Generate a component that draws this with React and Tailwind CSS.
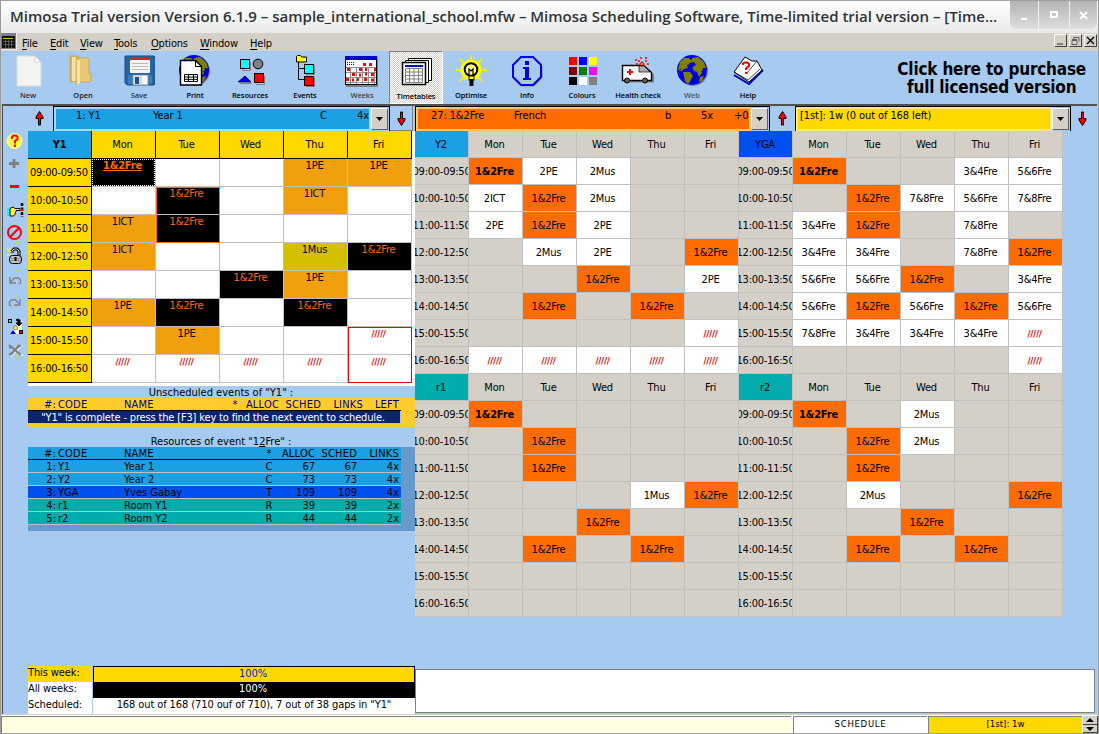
import React from "react";

const DAYS = ["Mon", "Tue", "Wed", "Thu", "Fri"];
const TIMES = [
  "09:00-09:50", "10:00-10:50", "11:00-11:50", "12:00-12:50",
  "13:00-13:50", "14:00-14:50", "15:00-15:50", "16:00-16:50",
];
const F = "1&2Fre";
const X = "/////";

const MAIN = [
  ["*" + F, "", "", "1PE", "1PE"],
  ["", F, "", "1ICT", ""],
  ["1ICT", F, "", "", ""],
  ["1ICT", "", "", "1Mus", F],
  ["", "", F, "1PE", ""],
  ["1PE", F, "", F, ""],
  ["", "1PE", "", "", X],
  [X, X, X, X, X],
];

const SMALL = [
  {
    name: "Y2", head: "bg-[#1ca0e4]",
    rows: [
      ["*" + F, "2PE", "2Mus", "", ""],
      ["2ICT", F, "2Mus", "", ""],
      ["2PE", F, "2PE", "", ""],
      ["", "2Mus", "2PE", "", F],
      ["", "", F, "", "2PE"],
      ["", F, "", F, ""],
      ["", "", "", "", X],
      [X, X, X, X, X],
    ],
  },
  {
    name: "YGA", head: "bg-[#0050f0]",
    rows: [
      ["*" + F, "", "", "3&4Fre", "5&6Fre"],
      ["", F, "7&8Fre", "5&6Fre", "7&8Fre"],
      ["3&4Fre", F, "", "7&8Fre", ""],
      ["3&4Fre", "3&4Fre", "", "7&8Fre", F],
      ["5&6Fre", "5&6Fre", F, "", "3&4Fre"],
      ["5&6Fre", F, "5&6Fre", F, "5&6Fre"],
      ["7&8Fre", "3&4Fre", "3&4Fre", "3&4Fre", X],
      ["", "", "", "", X],
    ],
  },
  {
    name: "r1", head: "bg-[#00acac]",
    rows: [
      ["*" + F, "", "", "", ""],
      ["", F, "", "", ""],
      ["", F, "", "", ""],
      ["", "", "", "1Mus", F],
      ["", "", F, "", ""],
      ["", F, "", F, ""],
      ["", "", "", "", ""],
      ["", "", "", "", ""],
    ],
  },
  {
    name: "r2", head: "bg-[#00acac]",
    rows: [
      ["*" + F, "", "2Mus", "", ""],
      ["", F, "2Mus", "", ""],
      ["", F, "", "", ""],
      ["", "2Mus", "", "", F],
      ["", "", F, "", ""],
      ["", F, "", F, ""],
      ["", "", "", "", ""],
      ["", "", "", "", ""],
    ],
  },
];

function Globe({ cx, cy }) {
  return (
    <g transform={`translate(${cx - 15} ${cy - 15})`}>
      <circle cx="16" cy="16" r="15" fill="#808080" />
      <circle cx="15" cy="15" r="15" fill="#0000e8" />
      <path d="M3 7l4-4 5 0 3 3-2 3-3 1 1 3-4 1-3 3-3-2zM6 17l7 0 3 4-2 4-3 4-3-3z" fill="#808000" />
      <path d="M15 3l6-1 6 5 2 6-3 0-1 5-3 4-2-5-3-1-2-4 4-2-2-3-3 1zM23 22l4-1-2 5-3 1z" fill="#808000" />
      <path d="M15 23l3 4M19 22l2 5M3 14l2 5M25 16l2 4M13 8l3 5" stroke="#000080" strokeWidth="1.5" strokeDasharray="1 1" />
    </g>
  );
}

const TOOLS = [
  ["New", "12 54 32 34", <g key="i">
    <path d="M17 56h18l6 6v24H17z" fill="#f3f3f1" stroke="#dcdcda" strokeWidth="1" />
    <path d="M35 56v6h6z" fill="#fff" stroke="#c8c8c8" strokeWidth=".7" />
  </g>, "text-[#333]"],
  ["Open", "67 54 32 34", <g key="i">
    <path d="M70 56h8l1 1v23l-9 2z" fill="#d9b65c" stroke="#b8933c" strokeWidth=".6" />
    <path d="M72 57h4v24h-4z" fill="#f4e3a6" />
    <path d="M76 59l3-1h10v16h2v7l-2 1H79l-3 3z" fill="#e6c877" stroke="#c39d48" strokeWidth=".7" />
    <path d="M77 60l3 1v22l-3 2z" fill="#f5e3ab" />
  </g>, "text-[#222]"],
  ["Save", "123 54 32 34", <g key="i">
    <path d="M125 56h29l1 1v27l-1 1h-27l-2-2z" fill="#2464a4" stroke="#184a80" strokeWidth="1" />
    <rect x="128" y="75" width="24" height="9" fill="#3c7cbc" />
    <rect x="130" y="57" width="20" height="3" fill="#b83038" />
    <rect x="130" y="60" width="20" height="13" rx="1" fill="#f4f4f0" />
    <path d="M132 63.500h16M132 66.500h16M132 69.500h16" stroke="#b8b8b8" />
    <rect x="133" y="75" width="15" height="10" fill="#d8dce0" stroke="#909aa4" strokeWidth=".6" />
    <rect x="135" y="77" width="4" height="7" fill="#1c5490" />
    <rect x="142" y="76" width="5" height="8" fill="#f8f8f8" />
  </g>, "text-[#333]"],
  ["Print", "179 54 32 34", <g key="i">
    <Globe cx={194} cy={70} />
    <path d="M180.500 60.500h15l6 6v18.500h-21z" fill="#fff" stroke="#000" strokeWidth="1.400" />
    <path d="M195.500 60.500v6h6" fill="none" stroke="#000" />
    <path d="M184.500 74.500h13v7h-13zM184.500 77h13M184.500 79.300h13M188.500 74.500v7M193.500 74.500v7" fill="none" stroke="#000" />
  </g>],
  ["Resources", "234 54 32 34", <g key="i">
    <path d="M242 70.500h8.500v-9M256 84.500h8.500v-9M240 83.500h12" stroke="#808080" fill="none" />
    <rect x="240.500" y="59.500" width="9" height="9" fill="#0ff" stroke="#000" />
    <circle cx="258" cy="64" r="4.800" fill="#808080" stroke="#000" />
    <path d="M245 76l6 6h-13z" fill="#00f" stroke="#000" strokeWidth=".7" />
    <rect x="254.500" y="73.500" width="9" height="9" fill="#f00" stroke="#000" />
  </g>],
  ["Events", "289 54 32 34", <g key="i">
    <path d="M298.500 62v17.500h6M298.500 68.500h6" stroke="#000" fill="none" />
    <path d="M296.500 56.500l1-1h3l1 1.500h5v5h-10z" fill="#ff0" stroke="#000" />
    <path d="M306 74.500h8.500v-9M306 86.500h8.500v-9" stroke="#808080" fill="none" />
    <rect x="304.500" y="64.500" width="9" height="9" fill="#0ff" stroke="#000" />
    <rect x="304.500" y="76.500" width="9" height="9" fill="#f00" stroke="#000" />
  </g>],
  ["Weeks", "345 54 34 34", <g key="i">
    <rect x="346" y="58" width="32" height="29" fill="#808080" />
    <rect x="345.500" y="56.500" width="31" height="28" fill="#fff" stroke="#000" />
    <rect x="345" y="56" width="32" height="4" fill="#0000c0" />
    <path d="M347.500 62v3M349.500 62v3M351.500 62v3M353.500 62v3" stroke="#0000c0" strokeDasharray="1 1" />
    <path d="M346 67.500h30M346 72.500h30M346 77.500h30M346 82.500h30M350.500 67v17M356.500 67v17M362.500 67v17M368.500 67v17M374.500 67v17" stroke="#909090" />
    <path d="M363 64.500h3M369 64.500h3M374 69.500h2M347 69.500h3M359 69.500h3M365 69.500h2M352 74.500h3M359 75h2M371 74.500h3M346 79.500h3M364 79.500h3M357 79.500h2M371 80h3M352 80h2M365 74h2" stroke="#f00" strokeWidth="3" />
  </g>, "text-[#444]"],
  ["Timetables", "400 55 32 34", <g key="i">
    <path d="M408.500 58.500h23v22h-23z" fill="#fff" stroke="#000" />
    <path d="M405.500 60.500h23v22h-23z" fill="#fff" stroke="#000" />
    <path d="M402.500 62.500h23v22h-23z" fill="#fff" stroke="#000" strokeWidth="1.500" />
    <rect x="405" y="65" width="18" height="2" fill="#0000c0" />
    <path d="M405.500 68.500h17v14h-17zM405.500 72h17M405.500 75.500h17M405.500 79h17M409.500 68v14M414 68v14M418.500 68v14" fill="none" stroke="#808080" />
  </g>, "text-black", true],
  ["Optimise", "455 54 32 34", <g key="i">
    <circle cx="471" cy="70" r="10.500" fill="#ff0" />
    <path d="M471 55v6M456 70h5M481 70h6M460 59l4 4M482 59l-4 4M460 81l4-4M482 81l-4-4" stroke="#f0f000" strokeWidth="2" />
    <circle cx="471" cy="69.500" r="6.300" fill="#ffff90" stroke="#000" strokeWidth="2" />
    <path d="M469 76v-7l2 2 2-2v7" fill="none" stroke="#000" strokeWidth="1.200" />
    <rect x="469" y="76" width="5" height="4" fill="#ff0" stroke="#000" />
    <path d="M471.500 79v7" stroke="#000" strokeWidth="4" />
  </g>],
  ["Info", "511 54 32 34", <g key="i">
    <path d="M522 58h12l8 8v12l-8 8h-12" stroke="#808080" fill="none" />
    <path d="M521 57h12l8 8v12l-8 8h-12l-8-8V65z" fill="#a6caf0" stroke="#0000e8" strokeWidth="2" />
    <path d="M525 61h4v4h-4zM523 67h6v11h2v2h-8v-2h2v-9h-2z" fill="#0000e8" />
  </g>],
  ["Colours", "566 54 32 34", <g key="i">
    {["#f00", "#00f", "#ff0", "#800000", "#008000", "#f0f", "#000", "#fff", "#808080"].map((c, n) => (
      <rect key={c} x={569 + (n % 3) * 10} y={57 + Math.floor(n / 3) * 10} width="8" height="8" fill={c} />
    ))}
  </g>],
  ["Health check", "621 54 34 34", <g key="i">
    <path d="M624 81.500h29v-8" fill="none" stroke="#808080" strokeWidth="2" />
    <path d="M622.500 65.500h21l8 7v8h-29z" fill="#fff" stroke="#000" strokeWidth="1.400" />
    <path d="M639 66h5l6 6h-11z" fill="#b0b0b0" stroke="#000" strokeWidth=".7" />
    <circle cx="627" cy="80.500" r="2.500" fill="#606060" stroke="#000" />
    <circle cx="645" cy="80.500" r="2.500" fill="#606060" stroke="#000" />
    <path d="M630 69v6M627 72h6" stroke="#f00" strokeWidth="2" />
    <path d="M640 65v-1l2-2 2 2v1z" fill="#ff0" stroke="#f00" strokeWidth="1.200" />
    <path d="M635 60h2M640 58h2M645 58h2M636 64h2M638 61h2M645 61h2M647 64h2" stroke="#f00" strokeWidth="1.500" />
  </g>],
  ["Web", "676 54 32 34", <Globe key="i" cx={692} cy={70} />, "text-[#555]"],
  ["Help", "732 54 32 34", <g key="i">
    <path d="M734 75l15 9 14-14" fill="none" stroke="#0000c0" strokeWidth="2" />
    <path d="M745 57l7 4 5 0 5 9-13 12-15-10z" fill="#fff" stroke="#000" />
    <path d="M734 72l14 8 12-11M757 61l-10 12" fill="none" stroke="#000" strokeWidth=".7" />
    <path d="M743 65v-1.500l1.500-1h3l1.500 1.500v2l-3 2.500v1.500" fill="none" stroke="#f00" strokeWidth="2" />
    <path d="M745 73h2.500" stroke="#f00" strokeWidth="2" />
  </g>],
];

const SIDE = [
  ["3 131 24 21", <g key="i"><circle cx="14.500" cy="141" r="7.500" fill="#ff4" stroke="#ffff90" /><path d="M12 139v-2l1.500-1.500h2.500l1.500 1.500v2l-2.500 2v2.500M15 144.500v2.500" fill="none" stroke="#f00" strokeWidth="2" /></g>],
  ["3 152 24 23", <path key="i" d="M14 159v9M9 163.500h10" stroke="#808080" strokeWidth="3" />],
  ["3 175 24 23", <path key="i" d="M10 186.500h9" stroke="#f00" strokeWidth="3" />],
  ["3 198 24 24", <g key="i">
    <rect x="7" y="208" width="3" height="8" fill="#0ff" />
    <path d="M10 208.500l3-1.500 2 1.500h5v2h-4v1.500l-1 1v1.500l-1.500 1.500H10z" fill="#ff4" stroke="#000" />
    <path d="M22 203v14" stroke="#000" strokeWidth="2.500" strokeDasharray="3 1.500" /><rect x="20.500" y="209" width="3" height="2" fill="#f00" />
  </g>],
  ["3 222 24 22", <g key="i" fill="none" stroke="#f00" strokeWidth="2"><circle cx="14.500" cy="232.500" r="6.500" /><path d="M10 237l9-9" /></g>],
  ["3 244 24 24", <g key="i">
    <path d="M12 253v-2l2-2h3l2 2v5" fill="none" stroke="#000" strokeWidth="3" /><path d="M12 253v-2l2-2h3l2 2v5" fill="none" stroke="#c0c0c0" strokeWidth="1" />
    <path d="M7 249l4 3M7 255h3M10 248v2" stroke="#ff0" strokeWidth="1.300" />
    <rect x="9.500" y="255.500" width="12" height="8" rx="3" fill="#c0c0c0" stroke="#000" />
    <path d="M10 258.500h11M10 260.500h11" stroke="#808080" strokeWidth=".7" /><path d="M15.500 257v4" stroke="#000" strokeWidth="2" />
  </g>],
  ["3 268 24 23", <path key="i" d="M10 277v6h6M10.500 282l4-4h4l2 2v3l-2 1" fill="none" stroke="#808080" strokeWidth="1.300" />],
  ["3 291 24 22", <path key="i" d="M20 299v6h-6M19.500 304l-4-4h-4l-2 2v3l2 1" fill="none" stroke="#808080" strokeWidth="1.300" />],
  ["3 313 24 25", <g key="i">
    <path d="M22 320v14H9z" fill="#fff" />
    <rect x="8.500" y="319.500" width="3" height="3" fill="#0ff" stroke="#000" />
    <path d="M17 319l3 1v3h2l-3 3-3-3h2v-2l-2-1z" fill="#000" stroke="#000" />
    <circle cx="15.500" cy="328" r="2" fill="#ff0" stroke="#808080" />
    <path d="M13 330l3 4h-6z" fill="#00f" /><rect x="19.500" y="330.500" width="3" height="3" fill="#f00" stroke="#000" />
  </g>],
  ["3 338 24 24", <g key="i"><path d="M11 356l11-11M20 355h3" stroke="#fff" strokeWidth="1.500" /><path d="M9 345l5 4v2l-5 4M21 345l-5 4v2l5 4M9 348l3-1M11 355l8-10" fill="none" stroke="#808080" strokeWidth="2" /></g>],
];

function SvgBox({ box, children, className = "" }) {
  const [, , w, h] = box.split(" ");
  return (
    <svg viewBox={box} width={w} height={h} className={"block shrink-0 " + className}>{children}</svg>
  );
}

function TitleBar() {
  return (
    <div className="flex h-[33px] shrink-0 border-t border-[#a0a0a0] bg-gradient-to-b from-white to-[#e9e9e9]">
      <div className="w-[1000px] shrink-0 overflow-hidden pl-[9px] pt-[3px] font-['Open_Sans',sans-serif] text-[15px] font-semibold leading-[24px] whitespace-nowrap text-[#2e3436] [font-stretch:normal]">
        <span>Mimosa Trial version Version 6.1.9 – sample_international_school.mfw – Mimosa Scheduling Software, Time-limited trial version – [Time...</span>
      </div>
      <div className="ml-[9px] flex h-[28px] w-[87px] rounded-b-md bg-gradient-to-b from-[#b4b4b4] to-[#dedede] text-white">
        <svg width="87" height="28" viewBox="0 0 87 28" fill="none">
          <path d="M28.500 0v28M59.500 0v28" stroke="#f2f2f2" />
          <path d="M11 18h6" stroke="#fff" strokeWidth="2" />
          <rect x="41" y="11" width="6" height="5" stroke="#fff" strokeWidth="2" />
          <path d="M70 11l7 7M77 11l-7 7" stroke="#fff" strokeWidth="2" />
        </svg>
      </div>
    </div>
  );
}

function MdiButton({ children, className = "" }) {
  return (
    <div className={"h-[13px] w-[13px] border border-t-white border-l-white border-r-[#404040] border-b-[#404040] bg-[#d4d0c8] " + className}>
      <svg width="11" height="11" viewBox="0 0 11 11" fill="none" className="block">{children}</svg>
    </div>
  );
}

function MenuBar() {
  const items = [
    ["File", "w-[28px]"], ["Edit", "w-[30px]"], ["View", "w-[34px]"], ["Tools", "w-[37px]"],
    ["Options", "w-[49px]"], ["Window", "w-[50px]"], ["Help", "w-[40px]"],
  ];
  return (
    <div className="flex h-[18px] shrink-0 bg-[#d4d0c8]">
      <svg width="16" height="17" viewBox="0 0 16 17" className="block shrink-0">
        <rect width="16" height="17" fill="#808080" /><rect x="1" y="3" width="13" height="12" fill="#101010" />
        <path d="M2 5.500h10" stroke="#cc0" /><path d="M2 8.500h11M2 11.500h11M4.500 7v8M7.500 7v8M10.500 7v8" stroke="#707070" strokeWidth=".7" />
        <path d="M15.500 0v17M0 16.500h16" stroke="#eee" />
      </svg>
      <div className="flex pl-[5px] pt-[3px]">
        {items.map(([t, w]) => (
          <div key={t} className={"shrink-0 text-[11px] leading-[15px] tracking-[-0.2px] " + w}>
            <span className="underline underline-offset-2">{t[0]}</span>{t.slice(1)}
          </div>
        ))}
      </div>
      <div className="ml-auto mr-px mt-px flex">
        <MdiButton><path d="M2 9h6" stroke="#808080" strokeWidth="2" /></MdiButton>
        <MdiButton className="ml-[2px]"><path d="M4 2.500h5v4M4 2v2M2 5.500h5v4H2zM2 4.500h5" stroke="#606060" /></MdiButton>
        <MdiButton className="ml-[2px]"><path d="M2 2l7 7M9 2l-7 7" stroke="#000" strokeWidth="1.300" /></MdiButton>
      </div>
    </div>
  );
}

function Toolbar() {
  return (
    <div className="flex h-[53px] shrink-0 bg-[#a6caf0]">
      <div className="grid grid-cols-[55px_56px_56px_55px_55px_57px_54px_55px_56px_55px_56px_54px_56px_54px]">
        {TOOLS.map(([label, box, art, tone, active]) => (
          <div
            key={label}
            className={
              "flex w-[54px] flex-col items-center pt-[3px] " +
              (active ? "border border-t-[#808080] border-l-[#808080] border-r-white border-b-white bg-[repeating-conic-gradient(#d4d0c8_0_25%,#ffffff_0_50%)] bg-[length:2px_2px]" : "")
            }
          >
            <SvgBox box={box}>{art}</SvgBox>
            <div className={"mt-[2px] text-[7.5px] leading-[10px] tracking-[-0.1px] font-['Open_Sans',sans-serif] font-semibold whitespace-nowrap [font-stretch:normal] " + (tone || "text-black")}>{label}</div>
          </div>
        ))}
      </div>
      <div className="ml-auto mr-[12px] pt-[9px] text-center text-[17px] font-bold leading-[18px] tracking-[-0.2px] whitespace-nowrap">
        <div>Click here to purchase</div>
        <div>full licensed version</div>
      </div>
    </div>
  );
}

function Arrow({ up }) {
  return (
    <svg width="9" height="15" viewBox="0 0 9 15" className="block">
      <path
        d={up ? "M4.500 .500L8 6v1.500H5.500V14h-2V7.500H1V6z" : "M4.500 14.500L8 9V7.500H5.500V1h-2v6.500H1V9z"}
        fill="#f00" stroke="#000" strokeWidth="1"
      />
    </svg>
  );
}

function DropButton() {
  return (
    <div className="my-[1px] mr-px flex w-[17px] shrink-0 items-center justify-center border border-t-white border-l-white border-r-[#606060] border-b-[#606060] bg-[#d4d0c8]">
      <svg width="7" height="4" viewBox="0 0 7 4"><path d="M0 0h7L3.500 4z" /></svg>
    </div>
  );
}

function ComboRow() {
  const combo = "flex h-[25px] shrink-0 border-t border-x border-black";
  const text = "grid flex-1 border-2 text-[11px] leading-[12px] tracking-[-0.1px] pt-px whitespace-nowrap ";
  return (
    <div className="flex h-[25px] shrink-0">
      <div className="flex w-[50px] shrink-0 items-center justify-center pl-[22px]"><Arrow up /></div>
      <div className={combo + " w-[337px]"}>
        <div className={text + "grid-cols-[77px_167px_37px_1fr] border-[#a6d8f8] bg-[#1ca0e4] pl-[20px]"}>
          <span>1: Y1</span><span>Year 1</span><span>C</span><span>4x</span>
        </div>
        <DropButton />
      </div>
      <div className="flex w-[23px] shrink-0 items-center justify-center border-b border-r border-[#808080]"><Arrow /></div>
      <div className="w-[2px] shrink-0 bg-[#a6caf0]" />
      <div className={combo + " w-[355px]"}>
        <div className={text + "grid-cols-[83px_151px_36px_33px_1fr] border-[#ffc860] bg-[#fc6c00] pl-[13px]"}>
          <span>27: 1&amp;2Fre</span><span>French</span><span>b</span><span>5x</span><span>+0</span>
        </div>
        <DropButton />
      </div>
      <div className="flex w-[25px] shrink-0 items-center justify-center"><Arrow up /></div>
      <div className={combo + " w-[276px]"}>
        <div className={text + "border-[#ffe880] bg-[#ffd800] pl-[2px]"}>
          <span>[1st]: 1w (0 out of 168 left)</span>
        </div>
        <DropButton />
      </div>
      <div className="flex w-[23px] shrink-0 items-center justify-center"><Arrow /></div>
    </div>
  );
}

function mainTone(t) {
  if (t.endsWith(F)) return "bg-black text-[#fc6c00]";
  if (t === X) return "bg-white text-[#f00000] text-[9.5px] tracking-[-0.3px] font-bold";
  if (t === "1Mus") return "bg-[#d4c000] text-black";
  if (t) return "bg-[#f0a00c] text-black";
  return "bg-white";
}

function MainGrid() {
  return (
    <div className="relative grid w-[384px] grid-cols-[repeat(6,64px)] grid-rows-[28px_repeat(8,28px)] text-center text-[11px] leading-[12px] tracking-[-0.2px]">
      <div className="border-b border-r border-black bg-[#1ca0e4] font-bold leading-[27px]">Y1</div>
      {DAYS.map((d) => (
        <div key={d} className="border-b border-r border-black bg-[#ffd800] pr-[2px] leading-[27px]">{d}</div>
      ))}
      {MAIN.map((row, r) => (
        <React.Fragment key={r}>
          <div className="border-b border-r border-black bg-[#ffd800] pr-px leading-[28px] tracking-[-0.25px] whitespace-nowrap">{TIMES[r]}</div>
          {row.map((t, c) => (
            <div key={c} className={"border-b border-r border-[#c0c0c0] " + mainTone(t)}>
              <div className={"pr-[2px] pt-px " + (t[0] === "*" ? "h-full font-bold underline outline-1 -outline-offset-1 outline-dotted outline-white" : "")}>
                {t.replace("*", "")}
              </div>
            </div>
          ))}
        </React.Fragment>
      ))}
      <div className="absolute left-[128px] top-[56px] h-[56px] w-[64px] border border-[#fc6c00]" />
      <div className="absolute left-[320px] top-[196px] h-[56px] w-[64px] border border-[#f00000]" />
    </div>
  );
}

function smallTone(t) {
  if (t[0] === "*") return "bg-[#fc6c00] font-bold";
  if (t === F) return "bg-[#fc6c00]";
  if (t === X) return "bg-white text-[#f00000] text-[9.5px] tracking-[-0.3px] font-bold";
  return t ? "bg-white" : "bg-[#d4d0c8]";
}

function SmallGrid({ data }) {
  const cell = "overflow-hidden border-b border-r border-[#c0c0c0] ";
  return (
    <div className="grid grid-cols-[repeat(6,54px)] grid-rows-[repeat(9,27px)] text-center text-[11px] leading-[27px] tracking-[-0.2px] whitespace-nowrap">
      <div className={cell + "pr-px " + data.head}>{data.name}</div>
      {DAYS.map((d) => <div key={d} className={cell + "bg-[#d4d0c8] pr-[2px]"}>{d}</div>)}
      {data.rows.map((row, r) => (
        <React.Fragment key={r}>
          <div className={cell + "flex justify-center bg-[#d4d0c8] tracking-[-0.25px]"}><span className="shrink-0">{TIMES[r]}</span></div>
          {row.map((t, c) => <div key={c} className={cell + "pr-[2px] " + smallTone(t)}>{t.replace("*", "")}</div>)}
        </React.Fragment>
      ))}
    </div>
  );
}

const RESOURCES = [
  ["1:", "Y1", "Year 1", "C", "67", "67", "4x", "bg-[#1ca0e4]"],
  ["2:", "Y2", "Year 2", "C", "73", "73", "4x", "bg-[#1ca0e4]"],
  ["3:", "YGA", "Yves Gabay", "T", "109", "109", "4x", "bg-[#0050f0]"],
  ["4:", "r1", "Room Y1", "R", "39", "39", "2x", "bg-[#00acac]"],
  ["5:", "r2", "Room Y2", "R", "44", "44", "2x", "bg-[#00acac]"],
];

function ResourceCells({ cells }) {
  return cells.map((v, i) => (
    <span key={i} className={i === 0 || i > 3 ? "text-right" : i === 3 ? "text-center" : "pl-[2px]"}>{v}</span>
  ));
}

function Tables() {
  const resCols = "grid grid-cols-[28px_66px_139px_16px_38px_42px_42px] w-[373px] h-[13px] leading-[14px] border-b ";
  return (
    <div className="text-[11px] whitespace-nowrap">
      <div className="h-[12px] pr-px text-center leading-[13px]">Unscheduled events of "Y1" :</div>
      <div className="h-[29px] bg-[#ffcc30]">
        <div className="grid h-[13px] w-[373px] grid-cols-[28px_66px_107px_12px_38px_42px_42px_36px] border-b border-black leading-[14px] tracking-[0.2px] text-[#000080]">
          <span className="text-right">#:</span><span className="pl-[2px]">CODE</span><span className="pl-[2px]">NAME</span><span className="text-center">*</span>
          <span className="text-right">ALLOC</span><span className="text-right">SCHED</span><span className="text-right">LINKS</span><span className="text-right">LEFT</span>
        </div>
        <div className="h-[13px] w-[373px] border-b border-r border-[#c0c0c0] bg-[#0c246c] pr-[2px] text-center leading-[14px] tracking-[-0.16px] text-white">"Y1" is complete - press the [F3] key to find the next event to schedule.</div>
      </div>
      <div className="mt-[8px] h-[12px] pr-px text-center leading-[13px]">Resources of event "1<span className="underline">2</span>Fre" :</div>
      <div className="h-[84px] bg-[#6699cc]">
        <div className={resCols + "tracking-[0.2px] border-black bg-[#1ca0e4]"}><ResourceCells cells={["#:", "CODE", "NAME", "*", "ALLOC", "SCHED", "LINKS"]} /></div>
        {RESOURCES.map((r) => (
          <div key={r[0]} className={resCols + "border-[#c0c0c0] " + r[7]}><ResourceCells cells={r.slice(0, 7)} /></div>
        ))}
      </div>
    </div>
  );
}

function Progress() {
  const label = "h-[16px] leading-[13px] ";
  return (
    <div className="mt-auto flex h-[48px] text-[11px] tracking-[-0.1px] whitespace-nowrap">
      <div className="mr-px w-[64px] bg-white">
        <div className={label + "bg-[#ffd800]"}>This week:</div>
        <div className={label}>All weeks:</div>
        <div className={label}>Scheduled:</div>
      </div>
      <div className="flex-1 bg-white text-center">
        <div className="h-[16px] border border-b-0 border-black bg-[#ffd800] pr-[2px] leading-[13px] text-[#0020e0]">100%</div>
        <div className="h-[16px] bg-black pr-[2px] leading-[14px] text-white">100%</div>
        <div className="h-[16px] leading-[13px]">168 out of 168 (710 ouf of 710), 7 out of 38 gaps in "Y1"</div>
      </div>
    </div>
  );
}

function StatusBar() {
  return (
    <div className="flex h-[19px] shrink-0 border-b border-[#a0a0a0] bg-white text-[9.500px] leading-[14px]">
      <div className="mt-px flex-1 border-l border-t border-[#808080] bg-[#ffffe1]" />
      <div className="ml-[2px] mt-px w-[134px] border-l border-t border-[#808080] bg-white text-center tracking-[0.7px]">SCHEDULE</div>
      <div className="ml-px mt-px w-[154px] border-l border-t border-[#808080] bg-[#ffd800] text-center">[1st]: 1w</div>
      <svg width="15" height="17" viewBox="0 0 15 17" className="ml-px mt-px block">
        <rect width="15" height="17" fill="#404040" /><path d="M0 0h14v8H0zM0 9h14v7H0z" fill="#d4d0c8" />
        <path d="M7 2l4 4H3zM7 15l4-4H3z" />
      </svg>
    </div>
  );
}

export default function App() {
  return (
    <div className="flex h-[734px] w-[1099px] flex-col overflow-hidden border-x border-[#9a9a9a] bg-[#a6caf0] font-['DejaVu_Sans_Condensed','DejaVu_Sans',sans-serif] text-black [font-stretch:condensed]">
      <TitleBar />
      <MenuBar />
      <Toolbar />
      <div className="mx-px flex h-[610px] shrink-0 flex-col border-l border-t-2 border-[#505050]">
        <ComboRow />
        <div className="flex min-h-0 flex-1">
          <div className="w-[25px] shrink-0">
            {SIDE.map(([box, art]) => <SvgBox key={box} box={box}>{art}</SvgBox>)}
          </div>
          <div className="flex w-[387px] shrink-0 flex-col">
            <div className="h-[255px] shrink-0 bg-white"><MainGrid /></div>
            <Tables />
            <Progress />
          </div>
          <div className="flex flex-1 flex-col">
            <div className="grid w-[648px] grid-cols-2">
              {SMALL.map((g) => <SmallGrid key={g.name} data={g} />)}
            </div>
            <div className="mb-px mr-[2px] mt-auto h-[44px] border border-[#808080] bg-white" />
          </div>
        </div>
      </div>
      <div className="h-px shrink-0 bg-[#d4d0c8]" />
      <StatusBar />
    </div>
  );
}
